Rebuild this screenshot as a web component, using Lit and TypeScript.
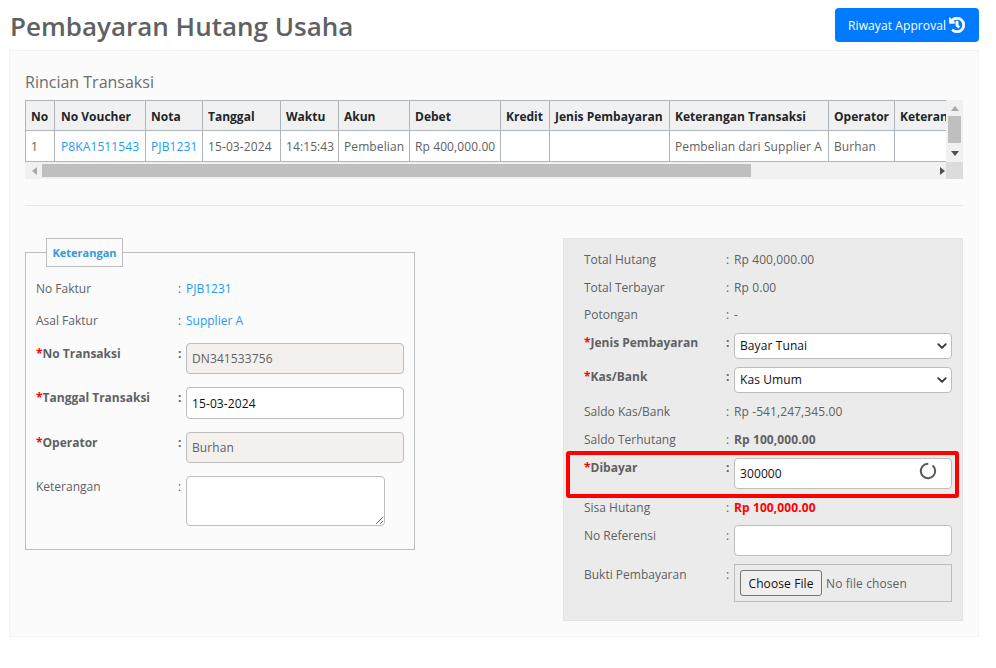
import { LitElement, css, html } from 'lit';
import { customElement } from 'lit/decorators.js';

const columns = [
  { label: 'No', width: 29, value: '1' },
  { label: 'No Voucher', width: 91, value: 'P8KA1511543', link: true },
  { label: 'Nota', width: 57, value: 'PJB1231', link: true },
  { label: 'Tanggal', width: 78, value: '15-03-2024' },
  { label: 'Waktu', width: 58, value: '14:15:43' },
  { label: 'Akun', width: 71, value: 'Pembelian' },
  { label: 'Debet', width: 91, value: 'Rp 400,000.00' },
  { label: 'Kredit', width: 49, value: '' },
  { label: 'Jenis Pembayaran', width: 120, value: '' },
  { label: 'Keterangan Transaksi', width: 159, value: 'Pembelian dari Supplier A' },
  { label: 'Operator', width: 66, value: 'Burhan' },
  { label: 'Keterangan', width: 80, value: '' },
];

const chevron = html`<svg class="chevron" viewBox="0 0 16 16" aria-hidden="true">
  <path d="M2 5l6 6 6-6" fill="none" stroke="#343a40" stroke-width="3" stroke-linecap="round" stroke-linejoin="round" />
</svg>`;

@customElement('app-root')
export class AppRoot extends LitElement {
  static styles = css`
    :host {
      display: block;
      width: 996px;
      height: 668px;
      overflow: hidden;
      background: #fff;
      color: #5f6163;
      font-family: 'Open Sans', 'Noto Sans', sans-serif;
      font-size: 12px;
      line-height: 19.5px;
    }

    * {
      box-sizing: border-box;
    }

    .top {
      display: flex;
      justify-content: space-between;
      align-items: flex-start;
      height: 50px;
      padding: 8px 17px 0 10px;
    }

    h1 {
      margin: 0;
      font-size: 26px;
      line-height: 36px;
      font-weight: 600;
      color: #5f6163;
    }

    .approval {
      display: flex;
      align-items: center;
      gap: 3px;
      width: 144px;
      height: 34px;
      padding: 1px 0 0 13px;
      border: 0;
      border-radius: 4px;
      background: #007bff;
      color: #fff;
      font: inherit;
      letter-spacing: 0.1px;
    }

    .approval svg {
      width: 16px;
      height: 16px;
      margin-top: -1px;
    }

    .card {
      width: 970px;
      height: 587px;
      margin-left: 9px;
      padding: 20px 15px 0;
      background: #fbfbfb;
      border: 1px solid #f3f3f3;
    }

    h2 {
      margin: 0;
      font-size: 16px;
      line-height: 22px;
      font-weight: 400;
      color: #6b6d70;
    }

    .scroller {
      display: grid;
      grid-template-columns: 921px 17px;
      grid-template-rows: 62px 17px;
      width: 938px;
      margin-top: 7px;
      background: #f1f1f1;
    }

    .clip {
      overflow: hidden;
    }

    table {
      table-layout: fixed;
      border-collapse: collapse;
      width: 949px;
      background: #fff;
    }

    th,
    td {
      padding: 1px 5px 0;
      border: 1px solid #adb5bd;
      text-align: left;
      white-space: nowrap;
      overflow: hidden;
    }

    th:nth-child(2),
    td:nth-child(2) {
      padding-left: 6px;
    }

    th {
      height: 30px;
      padding-top: 2px;
      background: #f1f1f1;
      color: #212529;
      font-weight: 700;
    }

    td {
      height: 31px;
      letter-spacing: 0.1px;
    }

    a {
      color: #1e9bf0;
      text-decoration: none;
    }

    .vbar {
      display: flex;
      flex-direction: column;
      align-items: center;
      justify-content: space-between;
      padding: 5px 0;
    }

    .vthumb {
      width: 13px;
      height: 27px;
      margin-top: -4px;
      background: #bfbfbf;
    }

    .hbar {
      display: flex;
      align-items: center;
      padding-left: 6px;
    }

    .hthumb {
      width: 709px;
      height: 13px;
      margin-left: 3px;
      background: #bfbfbf;
    }

    .hbar .right {
      margin-left: 187px;
    }

    .corner {
      background: #dcdcdc;
    }

    .arrow {
      width: 8px;
      height: 8px;
      flex: none;
    }

    hr {
      width: 938px;
      height: 1px;
      margin: 26px 0 0;
      border: 0;
      background: #e6e6e6;
    }

    .columns {
      display: flex;
      justify-content: space-between;
      align-items: flex-start;
      margin-top: 32px;
    }

    fieldset {
      width: 390px;
      height: 312px;
      margin: 0;
      padding: 12px 10px 0;
      border: 1px solid #bcbcbc;
    }

    legend {
      height: 29px;
      margin-left: 10px;
      padding: 0 5.5px;
      background: #fbfbfb;
      border: 1px solid #bcbcbc;
      color: #3498db;
      font-size: 11px;
      font-weight: 700;
      line-height: 28px;
    }

    .form {
      display: flex;
      flex-direction: column;
      gap: 13px;
    }

    fieldset .row {
      line-height: 19px;
    }

    .panel {
      width: 400px;
      height: 383px;
      padding: 11px 10px 0 20px;
      background: #ebebeb;
      border: 1px solid #e4e4e4;
    }

    .panel .form {
      gap: 8px;
    }

    .row {
      position: relative;
      display: grid;
      grid-template-columns: 142px 8px 1fr;
    }

    .row.control > span {
      padding-top: 1px;
    }

    .lead {
      margin-top: 1px;
    }

    .nudge {
      margin-top: 0.5px;
    }

    .after {
      margin-top: 1px;
    }

    .val {
      letter-spacing: 0.1px;
    }

    .req {
      font-weight: 700;
    }

    .req::before {
      content: '*';
      color: #f00;
    }

    .strong {
      font-weight: 700;
    }

    .danger {
      color: #f00;
      font-weight: 700;
    }

    .field {
      display: block;
      width: 100%;
      height: 31px;
      padding: 0 5px;
      background: #fff;
      border: 1px solid #bdbdbd;
      border-radius: 4px;
      color: #111;
      font: inherit;
      letter-spacing: 0.1px;
    }

    .field.tall {
      height: 32px;
    }

    .field.readonly {
      background: #f3f0ee;
      color: #5f6163;
    }

    .select {
      display: flex;
      align-items: center;
      justify-content: space-between;
      height: 26px;
      padding: 0 4px 0 5px;
      background: #fff;
      border: 1px solid #bdbdbd;
      border-radius: 4px;
      color: #111;
      letter-spacing: 0.1px;
    }

    .chevron {
      width: 10px;
      height: 10px;
    }

    textarea.field {
      width: 199px;
      height: 50px;
    }

    .spinner {
      position: absolute;
      right: 15px;
      top: 4px;
      width: 18px;
      height: 18px;
    }

    .alert {
      position: absolute;
      left: -18px;
      right: -7px;
      top: -7px;
      bottom: -9px;
      border: 4px solid #f00;
      border-radius: 3px;
      pointer-events: none;
    }

    .pay {
      position: relative;
    }

    .file {
      display: flex;
      align-items: center;
      gap: 4px;
      height: 38px;
      padding: 0 5px;
      border: 1px solid #bdbdbd;
      letter-spacing: 0.1px;
    }

    .file span:first-child {
      display: block;
      height: 26px;
      padding: 0 7.5px;
      background: #efefef;
      border: 1px solid #767676;
      border-radius: 3px;
      color: #111;
      line-height: 25px;
    }

    .file span:last-child {
      padding-top: 1px;
    }
  `;

  render() {
    return html`
      <div class="top">
        <h1>Pembayaran Hutang Usaha</h1>
        <button class="approval">
          Riwayat Approval
          <svg viewBox="0 0 512 512" aria-hidden="true">
            <path
              fill="#fff"
              stroke="#fff"
              stroke-width="28"
              d="M504 255.531c.253 136.64-111.18 248.372-247.82 248.468-59.015.042-113.223-20.53-155.822-54.911-11.077-8.94-11.905-25.541-1.839-35.607l11.267-11.267c8.609-8.609 22.353-9.551 31.891-1.984C173.062 425.135 212.781 440 256 440c101.705 0 184-82.311 184-184 0-101.705-82.311-184-184-184-48.814 0-93.149 18.969-126.068 49.932l50.754 50.754c10.08 10.08 2.941 27.314-11.313 27.314H24c-8.837 0-16-7.163-16-16V38.627c0-14.254 17.234-21.393 27.314-11.314l49.372 49.372C129.209 34.136 189.552 8 256 8c136.81 0 247.747 110.78 248 247.531zm-180.912 78.784l9.823-12.63c8.138-10.463 6.253-25.542-4.21-33.679L288 256.349V152c0-13.255-10.745-24-24-24h-16c-13.255 0-24 10.745-24 24v135.651l65.409 50.874c10.463 8.137 25.541 6.253 33.679-4.21z"
            />
          </svg>
        </button>
      </div>

      <div class="card">
        <h2>Rincian Transaksi</h2>
        <div class="scroller">
          <div class="clip">
            <table>
              <colgroup>
                ${columns.map((c) => html`<col style="width:${c.width}px" />`)}
              </colgroup>
              <tr>${columns.map((c) => html`<th>${c.label}</th>`)}</tr>
              <tr>
                ${columns.map(
                  (c) => html`<td>${c.link ? html`<a href="#">${c.value}</a>` : c.value}</td>`,
                )}
              </tr>
            </table>
          </div>
          <div class="vbar">
            <svg class="arrow" viewBox="0 0 8 8"><path d="M0 6h8L4 1z" fill="#a8a8a8" /></svg>
            <div class="vthumb"></div>
            <svg class="arrow" viewBox="0 0 8 8"><path d="M0 2h8L4 7z" fill="#505050" /></svg>
          </div>
          <div class="hbar">
            <svg class="arrow" viewBox="0 0 8 8"><path d="M6 0v8L1 4z" fill="#a8a8a8" /></svg>
            <div class="hthumb"></div>
            <svg class="arrow right" viewBox="0 0 8 8"><path d="M2 0v8l5-4z" fill="#505050" /></svg>
          </div>
          <div class="corner"></div>
        </div>

        <hr />

        <div class="columns">
          <fieldset>
            <legend>Keterangan</legend>
            <div class="form">
              <div class="row"><span>No Faktur</span><span>:</span><a href="#">PJB1231</a></div>
              <div class="row"><span>Asal Faktur</span><span>:</span><a href="#">Supplier A</a></div>
              <div class="row control">
                <span class="req">No Transaksi</span><span class="strong">:</span>
                <input class="field readonly" .value=${'DN341533756'} readonly />
              </div>
              <div class="row control">
                <span class="req">Tanggal Transaksi</span><span class="strong">:</span>
                <input class="field tall" .value=${'15-03-2024'} />
              </div>
              <div class="row control">
                <span class="req">Operator</span><span class="strong">:</span>
                <input class="field readonly" .value=${'Burhan'} readonly />
              </div>
              <div class="row control">
                <span>Keterangan</span><span>:</span>
                <textarea class="field"></textarea>
              </div>
            </div>
          </fieldset>

          <div class="panel">
            <div class="form">
              <div class="row"><span>Total Hutang</span><span>:</span><span class="val">Rp 400,000.00</span></div>
              <div class="row"><span>Total Terbayar</span><span>:</span><span class="val">Rp 0.00</span></div>
              <div class="row"><span>Potongan</span><span>:</span><span>-</span></div>
              <div class="row">
                <span class="req">Jenis Pembayaran</span><span class="strong">:</span>
                <div class="select">Bayar Tunai ${chevron}</div>
              </div>
              <div class="row nudge">
                <span class="req">Kas/Bank</span><span class="strong">:</span>
                <div class="select">Kas Umum ${chevron}</div>
              </div>
              <div class="row lead"><span>Saldo Kas/Bank</span><span>:</span><span class="val">Rp -541,247,345.00</span></div>
              <div class="row"><span>Saldo Terhutang</span><span>:</span><span class="strong val">Rp 100,000.00</span></div>
              <div class="row nudge">
                <span class="req">Dibayar</span><span class="strong">:</span>
                <div class="pay">
                  <input class="field" .value=${'300000'} />
                  <svg class="spinner" viewBox="0 0 18 18" aria-hidden="true">
                    <circle cx="9" cy="9" r="7.2" fill="none" stroke="#55585c" stroke-width="2" stroke-dasharray="40.2 5" transform="rotate(-50 9 9)" />
                  </svg>
                </div>
                <div class="alert"></div>
              </div>
              <div class="row after"><span>Sisa Hutang</span><span>:</span><span class="danger val">Rp 100,000.00</span></div>
              <div class="row control">
                <span>No Referensi</span><span>:</span>
                <input class="field" />
              </div>
              <div class="row control">
                <span>Bukti Pembayaran</span><span>:</span>
                <div class="file"><span>Choose File</span><span>No file chosen</span></div>
              </div>
            </div>
          </div>
        </div>
      </div>
    `;
  }
}
